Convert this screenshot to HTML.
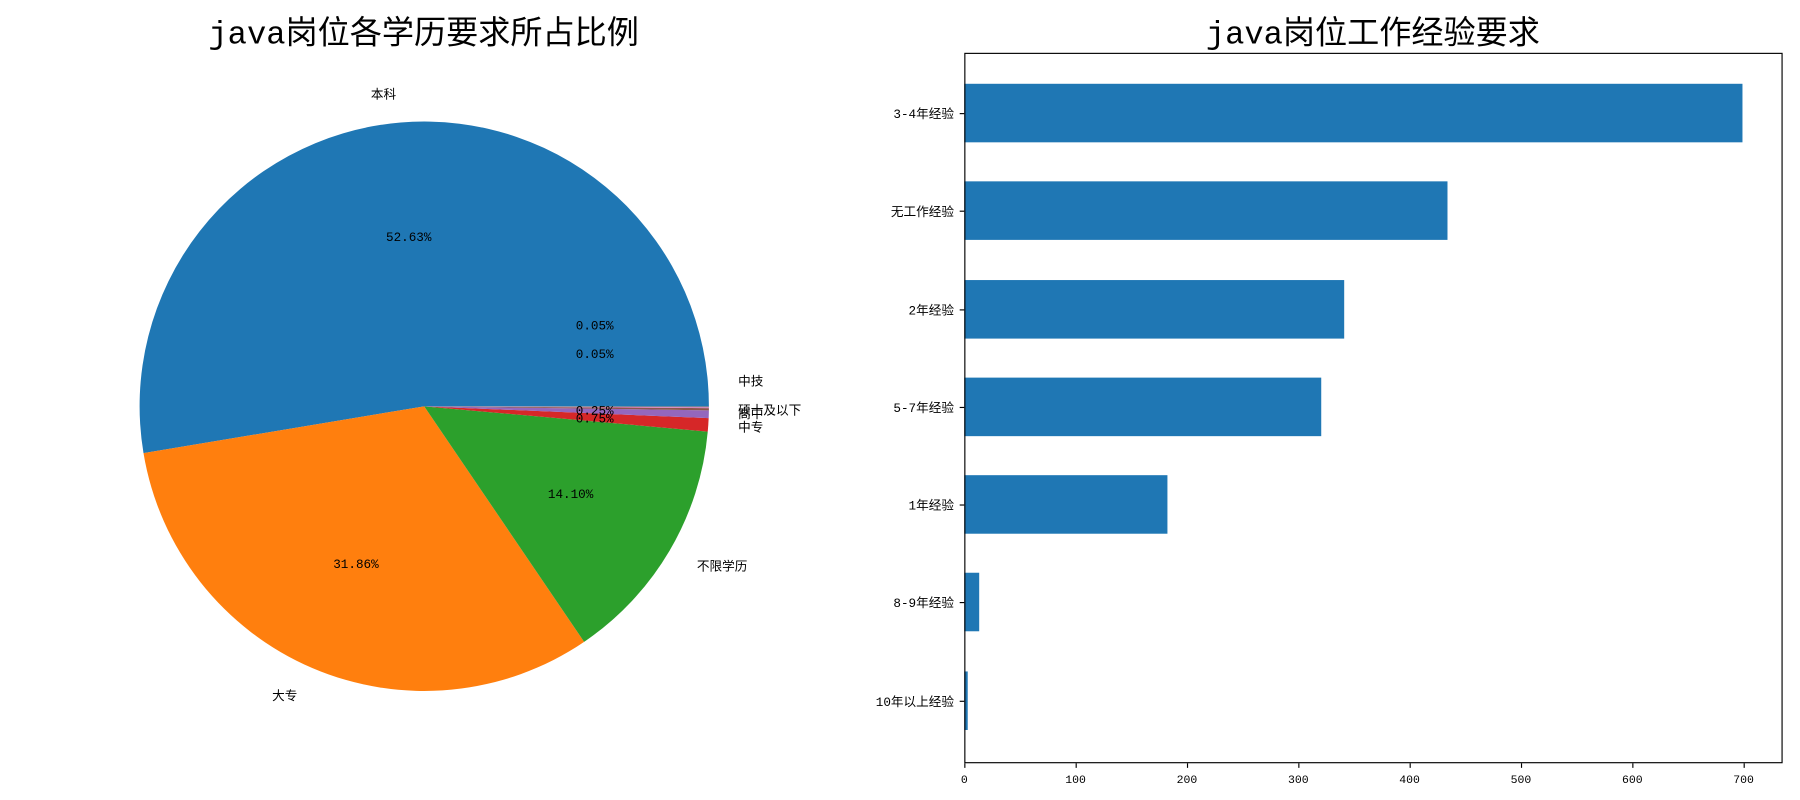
<!DOCTYPE html><html><head><meta charset="utf-8"><style>body{margin:0;background:#fff}svg text{font-family:"Liberation Mono","Noto Sans CJK SC",monospace;fill:#000}</style></head><body>
<svg width="1800" height="800" viewBox="0 0 1568 697" xmlns="http://www.w3.org/2000/svg" style="display:block">
<rect width="1568" height="697" fill="#fff"/>
<text x="369" y="38" font-size="28" text-anchor="middle">java岗位各学历要求所占比例</text>
<g stroke="none">
<path d="M369.5 354 L617.5 354 A248 248 0 1 0 124.9 394.8 Z" fill="#1f77b4"/>
<path d="M369.5 354 L124.9 394.8 A248 248 0 0 0 508.8 559.2 Z" fill="#ff7f0e"/>
<path d="M369.5 354 L508.8 559.2 A248 248 0 0 0 616.5 376 Z" fill="#2ca02c"/>
<path d="M369.5 354 L616.5 376 A248 248 0 0 0 617.3 364.3 Z" fill="#d62728"/>
<path d="M369.5 354 L617.3 364.3 A248 248 0 0 0 617.5 357.5 Z" fill="#9467bd"/>
<path d="M369.5 354 L617.5 357.5 A248 248 0 0 0 617.5 355.6 Z" fill="#8c564b"/>
<path d="M369.5 354 L617.5 355.6 A248 248 0 0 0 617.5 354.8 Z" fill="#e377c2"/>
<path d="M369.5 354 L617.5 354.8 A248 248 0 0 0 617.5 354 Z" fill="#7f7f7f"/>
</g>
<g font-size="11" text-anchor="middle">
<text x="334" y="86">本科</text>
<text x="248" y="610">大专</text>
<text x="629" y="497">不限学历</text>
<text x="356" y="210">52.63%</text>
<text x="310" y="495">31.86%</text>
<text x="497" y="434">14.10%</text>
<text x="518" y="287">0.05%</text>
<text x="518" y="312">0.05%</text>
<text x="518" y="361">0.25%</text>
<text x="518" y="368">0.75%</text>
</g>
<g font-size="11">
<text x="643" y="336">中技</text>
<text x="643" y="361">硕士及以下</text>
<text x="643" y="364">高中</text>
<text x="643" y="376">中专</text>
</g>
<text x="1196" y="38" font-size="28" text-anchor="middle">java岗位工作经验要求</text>
<g fill="#1f77b4">
<rect x="840" y="73" width="678" height="51"/>
<rect x="840" y="158" width="421" height="51"/>
<rect x="840" y="244" width="331" height="51"/>
<rect x="840" y="329" width="311" height="51"/>
<rect x="840" y="414" width="177" height="51"/>
<rect x="840" y="499" width="13" height="51"/>
<rect x="840" y="585" width="3" height="51"/>
</g>
<rect x="840.5" y="46.5" width="712" height="618" fill="none" stroke="#000" stroke-width="1"/>
<g stroke="#000">
<line x1="836" x2="840" y1="99" y2="99"/><line x1="836" x2="840" y1="184" y2="184"/><line x1="836" x2="840" y1="270" y2="270"/><line x1="836" x2="840" y1="355" y2="355"/><line x1="836" x2="840" y1="440" y2="440"/><line x1="836" x2="840" y1="525" y2="525"/><line x1="836" x2="840" y1="611" y2="611"/>
<line y1="665" y2="669" x1="840.5" x2="840.5"/><line y1="665" y2="669" x1="937.5" x2="937.5"/><line y1="665" y2="669" x1="1034.5" x2="1034.5"/><line y1="665" y2="669" x1="1131.5" x2="1131.5"/><line y1="665" y2="669" x1="1228.5" x2="1228.5"/><line y1="665" y2="669" x1="1325.5" x2="1325.5"/><line y1="665" y2="669" x1="1422.5" x2="1422.5"/><line y1="665" y2="669" x1="1519.5" x2="1519.5"/>
</g>
<g font-size="11" text-anchor="end">
<text x="831" y="103">3-4年经验</text><text x="831" y="188">无工作经验</text><text x="831" y="274">2年经验</text><text x="831" y="359">5-7年经验</text><text x="831" y="444">1年经验</text><text x="831" y="529">8-9年经验</text><text x="831" y="615">10年以上经验</text>
</g>
<g font-size="10" text-anchor="middle">
<text x="840" y="682">0</text><text x="937" y="682">100</text><text x="1034" y="682">200</text><text x="1131" y="682">300</text><text x="1228" y="682">400</text><text x="1325" y="682">500</text><text x="1422" y="682">600</text><text x="1519" y="682">700</text>
</g>
</svg></body></html>
